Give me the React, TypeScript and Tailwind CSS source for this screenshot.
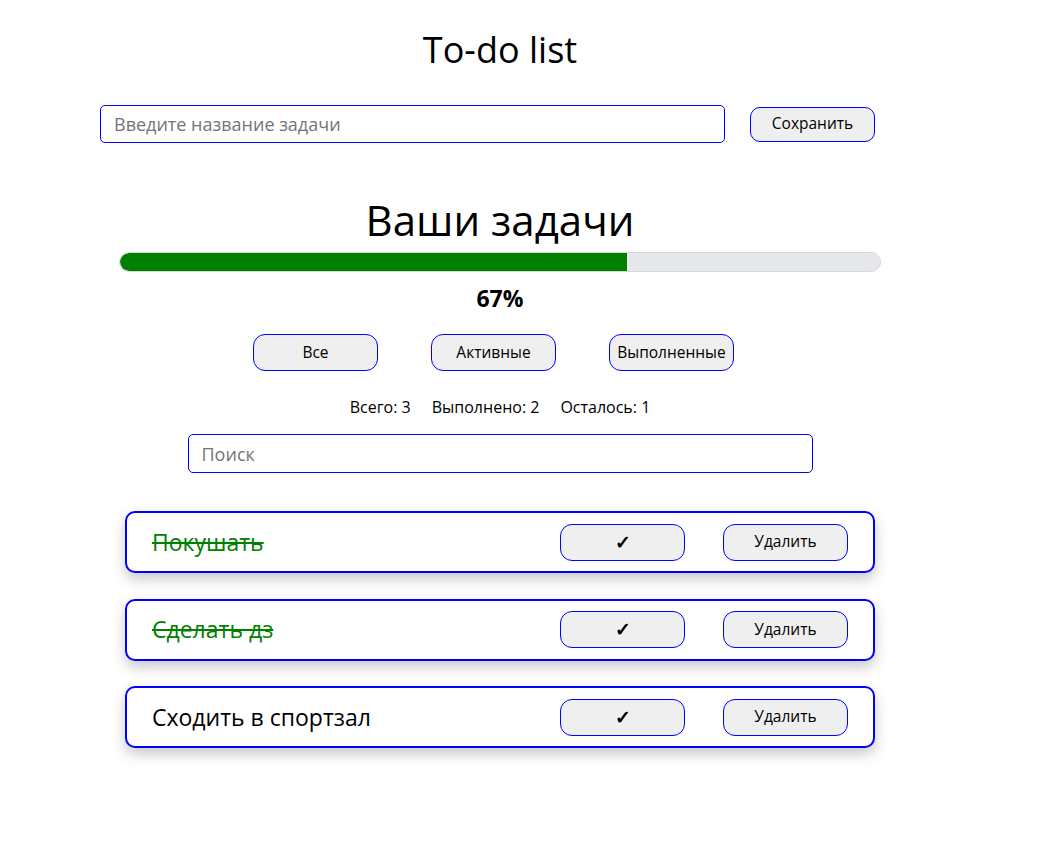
import React, { useState } from "react";

type Task = { id: number; title: string; done: boolean };

const font = { fontFamily: '"Open Sans", "Noto Sans", "Liberation Sans", sans-serif' };

export default function App() {
  const [tasks] = useState<Task[]>([
    { id: 1, title: "Покушать", done: true },
    { id: 2, title: "Сделать дз", done: true },
    { id: 3, title: "Сходить в спортзал", done: false },
  ]);
  const total = tasks.length;
  const done = tasks.filter((t) => t.done).length;
  const pct = Math.round((done / total) * 100);

  const btn =
    "h-[37px] w-[125px] rounded-[12px] border border-[#0000ff] bg-[#efefef] text-[15.5px] text-black flex items-center justify-center";

  return (
    <div className="min-h-[846px] w-full bg-white text-black" style={font}>
      <div className="ml-[100px] flex w-[800px] flex-col items-center">
        <h1 className="mt-[25px] flex h-[50px] items-center text-[36px] font-normal leading-none">
          To-do list
        </h1>

        <div className="mt-[30px] flex w-full items-center gap-[25px]">
          <input
            className="h-[38px] w-[625px] rounded-[5px] border border-[#0000ff] px-[13px] text-[18px] outline-none placeholder:text-[#757575]"
            placeholder="Введите название задачи"
          />
          <button className="h-[35px] w-[125px] rounded-[10px] border border-[#0000ff] bg-[#efefef] text-[15.5px] text-black">
            Сохранить
          </button>
        </div>

        <h2 className="mt-[52px] flex h-[50px] items-center text-[42px] font-normal leading-none">
          Ваши задачи
        </h2>

        <div className="mt-[7px] h-[20px] w-[762px] overflow-hidden rounded-full border border-[#d6d8dd] bg-[#e5e7eb]">
          <div className="h-full rounded-l-full bg-[#008000]" style={{ width: `${(done / total) * 100}%` }} />
        </div>

        <div className="mt-[13px] flex h-[26px] items-center text-[23px] font-bold leading-none">{pct}%</div>

        <div className="mt-[23px] flex w-full gap-[53px] pl-[153px]">
          <button className={btn}>Все</button>
          <button className={btn}>Активные</button>
          <button className={btn}>Выполненные</button>
        </div>

        <div className="mt-[26px] flex h-[20px] items-center gap-[21px] text-[16px] leading-none">
          <span>Всего: {total}</span>
          <span>Выполнено: {done}</span>
          <span>Осталось: {total - done}</span>
        </div>

        <input
          className="mt-[17px] h-[39px] w-[625px] rounded-[5px] border border-[#0000ff] px-[13px] text-[18px] outline-none placeholder:text-[#757575]"
          placeholder="Поиск"
        />

        <div className="mt-[38px] flex w-[750px] flex-col gap-[25.5px]">
          {tasks.map((t) => (
            <div
              key={t.id}
              className="flex h-[62px] items-center rounded-[10px] border-2 border-[#0000ff] bg-white pl-[25px] pr-[25px] shadow-[0_6px_14px_rgba(0,0,0,0.22)]"
            >
              <span
                className={
                  t.done
                    ? "flex-1 text-[23px] text-[#008000] line-through"
                    : "flex-1 text-[23px] text-black"
                }
              >
                {t.title}
              </span>
              <div className="flex gap-[38px]">
                <button className={btn}>
                  <span className="text-[19px] font-bold leading-none">✓</span>
                </button>
                <button className={btn}>Удалить</button>
              </div>
            </div>
          ))}
        </div>
      </div>
    </div>
  );
}
